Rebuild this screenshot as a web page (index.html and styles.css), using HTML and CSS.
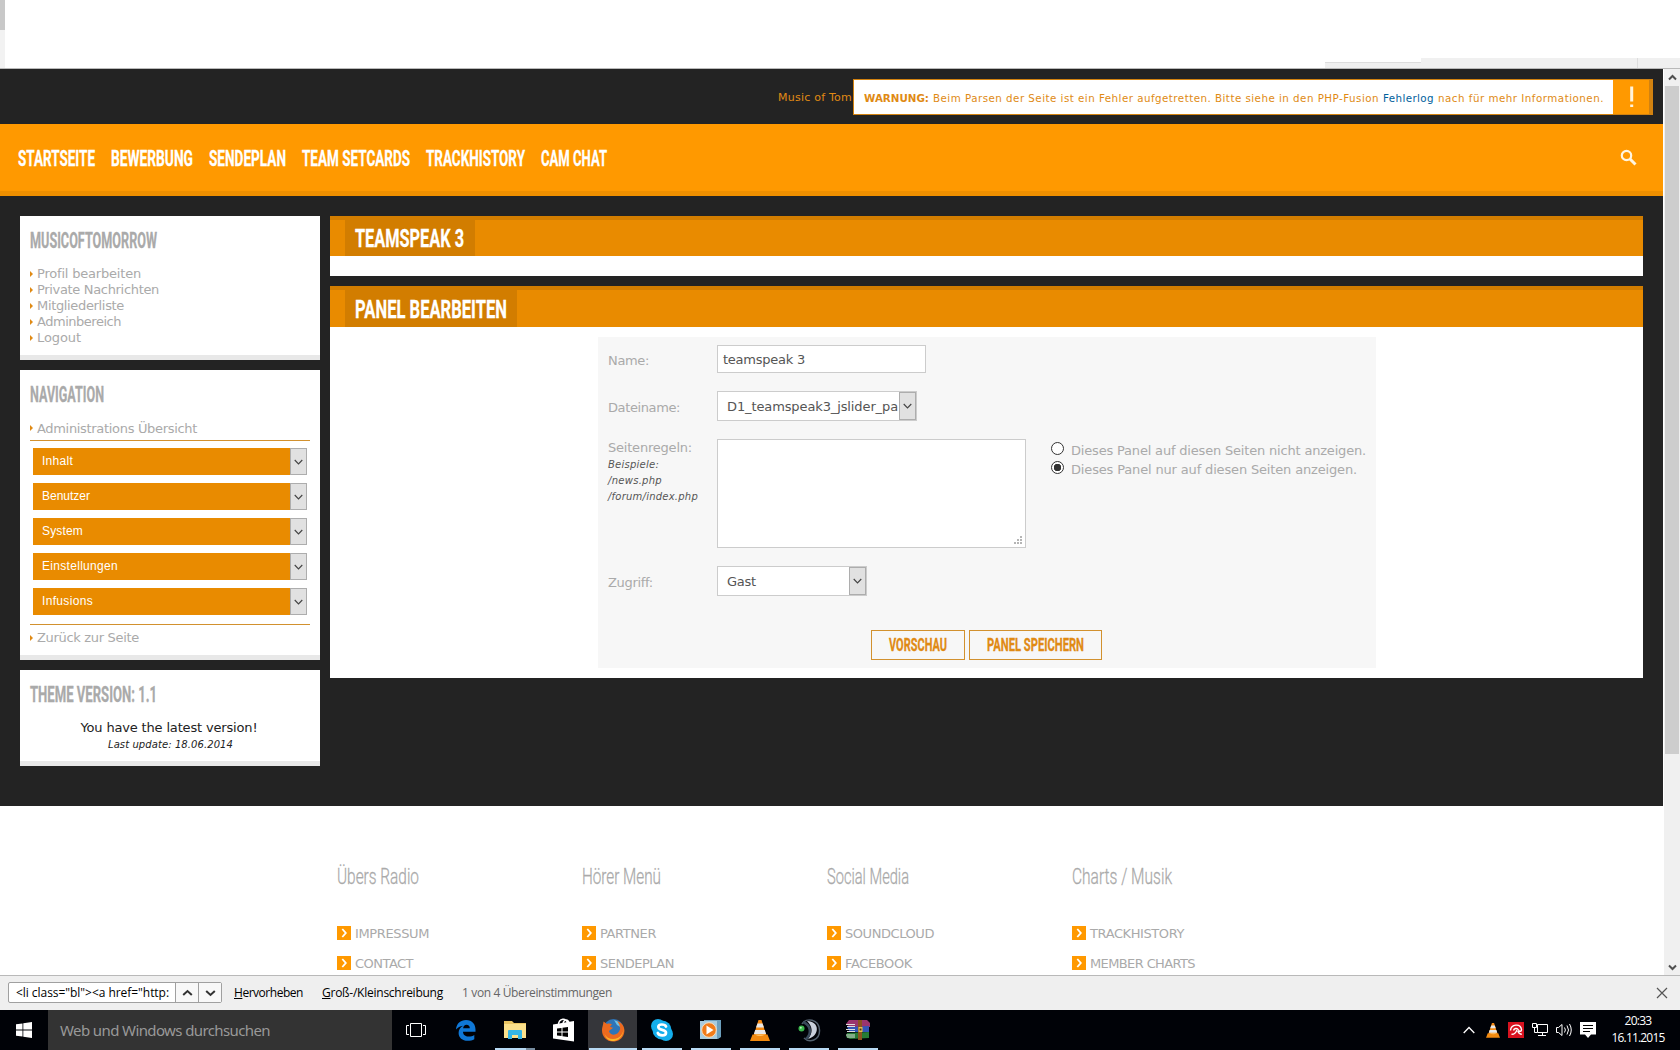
FILE: index.html
```html
<!DOCTYPE html>
<html lang="de">
<head>
<meta charset="utf-8">
<title>Panel bearbeiten</title>
<link rel="stylesheet" href="styles.css">
</head>
<body>
<svg class="defs" width="0" height="0">
  <symbol id="down" viewBox="0 0 10 6"><path d="M.8.8 5 5 9.2.8" fill="none" stroke="#444" stroke-width="1.3"/></symbol>
  <symbol id="cone" viewBox="0 0 20 22"><path d="M8.5 1h3l5 16h-13z" fill="#f58a13"/><path d="M7.5 4.5h5l1.5 4H6zM5.2 11h9.6l1.3 4H3.9z" fill="#e8e8e8"/><path d="M2.5 15.5h15L20 22H0z" fill="#f28a10"/><path d="M4.5 15.5h11q-5 3-11 0z" fill="#ffc36b"/></symbol>
  <symbol id="chev" viewBox="0 0 14 14"><path fill="#f90" d="M0 0h14v14H0z"/><path d="M5.3 3 8.8 7 5.3 11" fill="none" stroke="#fff" stroke-width="1.8"/></symbol>
</svg>

<div class="chrome"><i class="edge"></i><i class="step"></i><i class="strip"></i></div>

<div class="viewport">
  <div class="page">
    <header class="top">
      <span class="site" data-w="74">Music of Tom</span>
      <div class="warning">
        <p><b data-w="65">WARNUNG:</b><span data-w="446">Beim Parsen der Seite ist ein Fehler aufgetretten. Bitte siehe in den PHP-Fusion</span><a data-w="51">Fehlerlog</a><span data-w="166">nach für mehr Informationen.</span></p>
        <div class="bang"><svg width="36" height="34" viewBox="0 0 36 34"><path d="M17.2 6.500h3v15h-3zM17.200 24.500h3v2.500h-3z" fill="#fff3dc"/></svg></div>
      </div>
    </header>
    <nav class="menu">
      <a class="cond" data-w="77">STARTSEITE</a><a class="cond" data-w="82">BEWERBUNG</a><a class="cond" data-w="77">SENDEPLAN</a><a class="cond" data-w="108">TEAM SETCARDS</a><a class="cond" data-w="99">TRACKHISTORY</a><a class="cond" data-w="66">CAM CHAT</a>
      <svg class="search" width="17" height="17" viewBox="0 0 17 17" fill="none" stroke="#fff5e0"><circle cx="6.500" cy="6.500" r="4.700" stroke-width="2.200"/><path d="m10 10 5.500 5.500" stroke-width="3"/></svg>
    </nav>
    <div class="columns">
      <aside>
        <section class="box box-user">
          <h3 class="cond" data-w="127">MUSICOFTOMORROW</h3>
          <ul>
            <li><span data-w="104">Profil bearbeiten</span></li>
            <li><span data-w="122">Private Nachrichten</span></li>
            <li><span data-w="87">Mitgliederliste</span></li>
            <li><span data-w="84">Adminbereich</span></li>
            <li><span data-w="44">Logout</span></li>
          </ul>
        </section>
        <section class="box box-nav">
          <h3 class="cond" data-w="74">NAVIGATION</h3>
          <ul><li><span data-w="160">Administrations Übersicht</span></li></ul>
          <div class="selects">
            <div class="sel"><span data-w="31">Inhalt</span><i><svg width="9" height="6"><use href="#down"/></svg></i></div>
            <div class="sel"><span data-w="48">Benutzer</span><i><svg width="9" height="6"><use href="#down"/></svg></i></div>
            <div class="sel"><span data-w="41">System</span><i><svg width="9" height="6"><use href="#down"/></svg></i></div>
            <div class="sel"><span data-w="76">Einstellungen</span><i><svg width="9" height="6"><use href="#down"/></svg></i></div>
            <div class="sel"><span data-w="51">Infusions</span><i><svg width="9" height="6"><use href="#down"/></svg></i></div>
          </div>
          <ul><li><span data-w="102">Zurück zur Seite</span></li></ul>
        </section>
        <section class="box box-version">
          <h3 class="cond" data-w="127">THEME VERSION: 1.1</h3>
          <p><span data-w="177">You have the latest version!</span></p>
          <p class="small"><span data-w="125">Last update: 18.06.2014</span></p>
        </section>
      </aside>
      <main>
        <section class="panel panel-first">
          <header><h2><span class="cond" data-w="109">TEAMSPEAK 3</span></h2></header>
        </section>
        <section class="panel panel-edit">
          <header><h2><span class="cond" data-w="152">PANEL BEARBEITEN</span></h2></header>
          <form>
            <div class="row r-name"><label><span data-w="41">Name:</span></label><div class="field input"><span data-w="82">teamspeak 3</span></div></div>
            <div class="row r-file"><label><span data-w="72">Dateiname:</span></label><div class="field drop"><div><span data-w="171">D1_teamspeak3_jslider_pa</span></div><i><svg width="9" height="6"><use href="#down"/></svg></i></div></div>
            <div class="row r-rules">
              <label><span data-w="84">Seitenregeln:</span><em><span data-w="51">Beispiele:</span></em><em><span data-w="54">/news.php</span></em><em><span data-w="90">/forum/index.php</span></em></label>
              <div class="field area"><svg width="9" height="9" fill="#b5b5b5"><path d="M6 0h2v2H6zM3 3h2v2H3zM6 3h2v2H6zM0 6h2v2H0zM3 6h2v2H3zM6 6h2v2H6z"/></svg></div>
              <div class="radios">
                <div><i class="radio"></i><span data-w="295">Dieses Panel auf diesen Seiten nicht anzeigen.</span></div>
                <div><i class="radio on"></i><span data-w="286">Dieses Panel nur auf diesen Seiten anzeigen.</span></div>
              </div>
            </div>
            <div class="row r-access"><label><span data-w="45">Zugriff:</span></label><div class="field drop narrow"><div><span data-w="29">Gast</span></div><i><svg width="9" height="6"><use href="#down"/></svg></i></div></div>
            <div class="buttons"><a><span class="cond" data-w="58">VORSCHAU</span></a><a><span class="cond" data-w="97">PANEL SPEICHERN</span></a></div>
          </form>
        </section>
      </main>
    </div>
    <footer>
      <div><h4 class="cond" data-w="82">Übers Radio</h4><p><svg width="14" height="14"><use href="#chev"/></svg><span data-w="74">IMPRESSUM</span></p><p><svg width="14" height="14"><use href="#chev"/></svg><span data-w="58">CONTACT</span></p></div>
      <div><h4 class="cond" data-w="79">Hörer Menü</h4><p><svg width="14" height="14"><use href="#chev"/></svg><span data-w="56">PARTNER</span></p><p><svg width="14" height="14"><use href="#chev"/></svg><span data-w="74">SENDEPLAN</span></p></div>
      <div><h4 class="cond" data-w="82">Social Media</h4><p><svg width="14" height="14"><use href="#chev"/></svg><span data-w="89">SOUNDCLOUD</span></p><p><svg width="14" height="14"><use href="#chev"/></svg><span data-w="67">FACEBOOK</span></p></div>
      <div><h4 class="cond" data-w="100">Charts / Musik</h4><p><svg width="14" height="14"><use href="#chev"/></svg><span data-w="94">TRACKHISTORY</span></p><p><svg width="14" height="14"><use href="#chev"/></svg><span data-w="105">MEMBER CHARTS</span></p></div>
    </footer>
  </div>
  <div class="scrollbar">
    <svg width="9" height="7" viewBox="0 0 9 7"><path d="M1 5.500 4.500 2 8 5.500" fill="none" stroke="#505050" stroke-width="2"/></svg>
    <i></i>
    <svg width="9" height="7" viewBox="0 0 9 7"><path d="M1 1.500 4.500 5 8 1.500" fill="none" stroke="#505050" stroke-width="2"/></svg>
  </div>
</div>

<div class="findbar">
  <div class="find"><div class="query"><span data-w="153">&lt;li class="bl"&gt;&lt;a href="http:</span></div><i><svg width="11" height="8" viewBox="0 0 11 8"><path d="M1.200 6 5.500 2l4.300 4" fill="none" stroke="#333" stroke-width="2"/></svg></i><i><svg width="11" height="8" viewBox="0 0 11 8"><path d="M1.200 2 5.500 6l4.300-4" fill="none" stroke="#333" stroke-width="2"/></svg></i></div>
  <span class="opt1" data-w="69"><u>H</u>ervorheben</span>
  <span class="opt2" data-w="121"><u>G</u>roß-/Kleinschreibung</span>
  <span class="count" data-w="150">1 von 4 Übereinstimmungen</span>
  <svg class="close" width="12" height="12" viewBox="0 0 12 12"><path d="m1 1 10 10M11 1 1 11" stroke="#555" stroke-width="1.200"/></svg>
</div>

<div class="taskbar">
  <div class="start"><svg width="16" height="16" viewBox="0 0 16 16" fill="#fff"><path d="M0 2.300 6.500 1.400v6.200H0zM7.300 1.300 16 0v7.600H7.300zM0 8.400h6.500v6.200L0 13.700zM7.300 8.400H16V16l-8.700-1.300z"/></svg></div>
  <div class="cortana"><span data-w="210">Web und Windows durchsuchen</span></div>
  <div class="apps">
    <div><svg width="20" height="14" viewBox="0 0 20 14" fill="none" stroke="#fff"><path d="M4.500.5h11v13h-11zM3 2.500H.5v9H3M17 2.500h2.500v9H17"/></svg></div>
    <div><svg width="22" height="22" viewBox="0 0 22 22"><path d="M1 10.500C1.500 4.500 5.500 1 11 1c6.500 0 9.500 4.500 9.500 9.500v2.300H8c0 3.200 2.500 4.700 5.500 4.700 2.500 0 4.300-.7 5.800-1.600v4.300c-1.800 1-4 1.600-6.700 1.600-5.200 0-9-3-9-7.800 0-3.200 1.600-5.800 4.600-7.300C5 7.300 2.700 8.500 1 10.500zm7.100-1.200h6.700c0-2.300-1.200-3.600-3.300-3.600-1.900 0-3.100 1.400-3.400 3.600z" fill="#0f78d7"/></svg></div>
    <div class="run stacked"><svg width="22" height="20" viewBox="0 0 22 20"><path d="M0 1h8l2 2h12v15H0z" fill="#e9c461"/><path d="M0 4h22v14H0z" fill="#fbe08b"/><path d="M4 19v-8q0-1 1-1h12q1 0 1 1v8h-4v-4H8v4z" fill="#35b5e5"/></svg></div>
    <div><svg width="22" height="24" viewBox="0 0 22 24"><path d="M0 6.500 21 3v20.500L0 20.500z" fill="#fff"/><path d="M5.500 7c0-7 8.500-8 8.800-1.500M10 6c.5-5 5-5.500 6-1" fill="none" stroke="#fff" stroke-width="1.500"/><path d="M4 10.500 8.500 10v3.500H4zM9.500 9.800 15 9v4.500H9.500zM4 14.500h4.500V18L4 17.500zM9.500 14.500H15V19l-5.500-.8z" fill="#000"/></svg></div>
    <div class="run active"><svg width="24" height="24" viewBox="0 0 24 24"><circle cx="12.500" cy="11" r="10" fill="#2e75b8"/><path d="M13 2q7 2 8 8l-5-3z" fill="#6ec1e4"/><path d="M2.500 3.500 6 6c2-.8 3.500-.5 5 .5L9 8.500c1 1 2 1 3 1-1 2-3.500 2-4 4 1.500 4.500 9 4.500 11-2 .5-3-1-6-3-8.500 6 2 8.500 7 7 12.500C21.500 21 17 23.500 12 23.500 5.500 23.500 1 18.500 1 12.500c0-3 1-4.500 1.500-9z" fill="#ec6a1f"/><path d="M22 7c2 8-3 14-10 14-4 0-7-2-8.500-5C5 21 9 23.500 13 23c7-1 11-8 9-16z" fill="#fbb829"/></svg></div>
    <div class="run"><svg width="22" height="22" viewBox="0 0 22 22"><circle cx="7" cy="7" r="7" fill="#14aeec"/><circle cx="15" cy="15" r="7" fill="#14aeec"/><circle cx="11" cy="11" r="9.500" fill="#14aeec"/><path d="M15 7.500C14 5 7.300 4.500 7.300 8c0 3.800 7.700 2 7.700 5.700 0 3.600-7 3.300-8.200.3" fill="none" stroke="#fff" stroke-width="2.700" stroke-linecap="round"/></svg></div>
    <div class="run"><svg width="21" height="20" viewBox="0 0 21 20"><path d="M4 0h17v17l-3 2H4z" fill="#6c9fbd"/><path d="M0 1h17v18H0z" fill="#a8cce0"/><circle cx="9" cy="10" r="7.300" fill="#f07b1a" stroke="#f9ddbb"/><path d="m6.500 5.500 7 4.500-7 4.500z" fill="#fff"/></svg></div>
    <div class="run"><svg width="20" height="22"><use href="#cone"/></svg></div>
    <div class="run"><svg width="24" height="24" viewBox="0 0 24 24" fill="none"><path d="M5 6C9-1 22 1 22.500 12S12 25 7 20" stroke="#53616f" stroke-width="1.500"/><path d="M10 3c13 0 13 15 1 18 5-6 5-12-1-18z" fill="#c9d0dc"/><path d="M6 4c8 3 9 12 3 17" stroke="#39485a" stroke-width="2.500"/><circle cx="4.500" cy="10.500" r="3" fill="#39b54a"/><circle cx="3.800" cy="9.700" r="1" fill="#b8f0bb"/></svg></div>
    <div class="run"><svg width="24" height="20" viewBox="0 0 24 20"><path d="M3 0h18l3 3v4H4L0 4z" fill="#9a356e"/><path d="m1 7 22-1v6H4z" fill="#3455b7"/><path d="m1 13 22-1v6l-19 1-4-2z" fill="#267c35"/><path d="M0 4.500h9M1 6.500h8M0 9.500h9M1 11.500h8M0 15h9M1 17h8" fill="none" stroke="#ddd"/><path d="M12 0h4v20h-4z" fill="#8a5320"/><path d="M12.500 7h4v5h-4z" fill="#e6bd49"/><path d="M13.500 8.500h2v2h-2z" fill="#503010"/></svg></div>
  </div>
  <div class="tray">
    <svg width="12" height="8" viewBox="0 0 12 8"><path d="m.7 7 5.300-5.500L11.300 7" fill="none" stroke="#fff" stroke-width="1.300"/></svg>
    <svg width="14" height="16"><use href="#cone"/></svg>
    <svg width="16" height="16" viewBox="0 0 16 16"><path d="M0 0h16v16H0z" fill="#d8121f"/><path d="M2.500 8.500C3 2 12.500 1 13.500 7.500c.2 2-2 2.500-3 .5C9 5.500 6 6.500 5.500 8.500M9 8c-1 2.500-3 4.500-5.500 4.300M9.800 9c.7 1.800 1.800 3.300 4 3.300" fill="none" stroke="#fff" stroke-width="1.400"/></svg>
    <svg width="16" height="14" viewBox="0 0 16 14" fill="none" stroke="#fff"><path d="M5.500 1.500h10v8h-10zM10.500 10v3M6 12.500h8M.5.500h4v4h-4zM2.500 5v4.500h3"/></svg>
    <svg width="16" height="14" viewBox="0 0 16 14" fill="none" stroke="#fff"><path d="M.5 4.500h2L6 1.500v11L2.500 9.500h-2zM8.500 4.500q1.800 2.500 0 5M11 2.500q3 4.500 0 9M13.500 1q3.500 6 0 12"/></svg>
    <svg width="16" height="16" viewBox="0 0 16 16"><path d="M0 0h16v12.500h-5L8 16l-3-3.500H0z" fill="#fff"/><path d="M3 3.500h10M3 6.500h10M3 9.500h7" stroke="#000"/></svg>
    <div class="clock"><span data-w="27">20:33</span><br><span data-w="53">16.11.2015</span></div>
  </div>
</div>
<script src="fit.js"></script>
</body>
</html>
```
FILE: styles.css
```css
* { box-sizing: border-box; }
body { margin: 0; width: 1680px; height: 1050px; overflow: hidden; background: #fff; font: 13px/16px "DejaVu Sans", sans-serif; color: #aaa; }
h2, h3, h4, p, ul { margin: 0; padding: 0; }
ul { list-style: none; }
svg { display: block; flex: none; }
.defs { position: absolute; }
[data-w] { display: inline-block; white-space: nowrap; }
.cond { font-family: Roboto, sans-serif; transform-origin: 0 50%; -webkit-text-stroke: .3px currentColor; }

.chrome { height: 69px; position: relative; border-bottom: 1px solid #b9b9b9; }
.chrome i { position: absolute; }
.edge { left: 0; top: 0; width: 5px; height: 68px; background: linear-gradient(#c8c8c8 30px, #f2f2f2 30px); }
.step { left: 1325px; top: 62px; width: 96px; height: 6px; background: #f0f0f0; border-top: 1px solid #ddd; }
.strip { left: 1421px; top: 58px; width: 259px; height: 10px; background: linear-gradient(90deg, #f0f0f0 216px, #ddd 216px, #ddd 217px, #f0f0f0 217px); }

.viewport { display: flex; height: 906px; }
.page { width: 1663px; height: 906px; overflow: hidden; background: #232323; }
.top { height: 55px; position: relative; padding: 21px 0 0 778px; font-size: 11px; color: #e08a14; }
.warning { position: absolute; left: 853px; top: 10px; width: 800px; height: 36px; background: #fff; border: 1px solid #d28210; border-right: 4px solid #d28210; display: flex; justify-content: space-between; }
.warning p { display: flex; gap: 4px; padding: 10px 0 0 10px; font-size: 10.300px; color: #e08a14; }
.warning a { color: #00609c; }
.bang { background: #f90; }

.menu { height: 72px; background: #f90; border-bottom: 5px solid #ee8f00; display: flex; align-items: flex-start; gap: 16px; padding: 20px 26px 0 18px; color: #fff; font-size: 22.500px; font-weight: 700; line-height: 28px; }
.search { margin: 5px 0 0 auto; }

.columns { display: flex; gap: 10px; padding: 20px 20px 0; height: 610px; }
aside { width: 300px; display: flex; flex-direction: column; gap: 10px; }
.box { background: #fff; border-bottom: 5px solid #e8e8e8; padding: 11px 10px 0; }
.box h3 { font-size: 22px; line-height: 28px; height: 28px; margin-bottom: 11px; font-weight: 700; display: block; }
.box-user { height: 144px; }
.box-nav { height: 290px; }
.box-version { height: 96px; color: #222; text-align: center; }
.box-version h3 { color: #aaa; text-align: left; }
.box-version p { margin-left: -2px; }
.box-version .small { margin-left: 1px; font-size: 10px; font-style: italic; padding-top: 1px; }
.box li { display: flex; align-items: center; gap: 4px; height: 16px; }
.box li::before { content: ""; border: 3px solid transparent; border-left-color: #e08a14; border-right: 0; }
.box-nav h3 + ul li span { padding-top: 1px; }
.selects { margin: 4px 0 5px; padding: 7px 3px 9px; border: solid #d2912e; border-width: 1px 0; display: flex; flex-direction: column; gap: 8px; }
.sel { height: 27px; background: #e98b00; color: #fff; font: 12px/27px "Liberation Sans", sans-serif; padding-left: 9px; display: flex; justify-content: space-between; }
.sel i, .drop i { width: 17px; background: #e1e1e1; border: 1px solid #adadad; display: flex; align-items: center; justify-content: center; flex: none; }

main { flex: 1; display: flex; flex-direction: column; gap: 10px; }
.panel { background: #fff; }
.panel-first { height: 60px; }
.panel-edit { height: 392px; }
.panel header { background: #e98b00; border-top: 4px solid #d27d00; height: 40px; padding-left: 15px; display: flex; }
.panel-edit header { height: 41px; }
.panel h2 { background: #d27d00; color: #fff; padding: 3px 11px 0 10px; font-size: 26.500px; line-height: 30px; font-weight: 700; }
.panel-edit h2 { padding: 4px 10px 0; }
form { width: 778px; height: 331px; margin: 10px 0 0 268px; background: #f7f7f7; padding: 8px 0 0 10px; }
.row { display: flex; }
.row label { width: 109px; }
.field { background: #fff; border: 1px solid #ccc; color: #555; }
.input { width: 209px; height: 28px; padding: 6px 5px; }
.drop { width: 200px; height: 30px; display: flex; }
.drop div { flex: 1; min-width: 0; overflow: hidden; padding: 7px 0 0 9px; }
.narrow { width: 150px; }
.r-name label { padding-top: 8px; }
.r-file { margin-top: 18px; }
.r-file label { padding-top: 9px; }
.r-rules { margin-top: 18px; }
.r-rules label { padding-top: 1px; }
.row em { display: block; font-size: 10px; color: #555; position: relative; top: 1px; }
.area { width: 309px; height: 109px; display: flex; align-items: flex-end; justify-content: flex-end; padding: 2px; }
.radios { padding: 1px 0 0 25px; }
.radios div { display: flex; height: 19px; }
.radios span { padding-top: 3px; }
.radio { width: 13px; height: 13px; margin: 2px 7px 0 0; border: 1px solid #333; border-radius: 50%; background: #fff; }
.on { background: radial-gradient(#333 3.500px, #fff 4px); }
.r-access { margin-top: 18px; }
.r-access label { padding-top: 9px; }
.buttons { display: flex; gap: 4px; margin: 34px 0 0 263px; }
.buttons a { height: 30px; padding: 2px 17px 0; border: 1px solid #d2912e; color: #e08a14; font-size: 18px; font-weight: 700; line-height: 24px; }

footer { background: #fff; height: 169px; padding: 58px 0 0 337px; display: flex; }
footer > div { width: 245px; }
footer h4 { font-size: 22.500px; font-weight: 300; line-height: 24px; height: 24px; margin-bottom: 30px; color: #aaa; }
footer p { display: flex; gap: 4px; height: 30px; align-items: center; margin-top: 0; }
footer p span { padding-top: 1px; }

.scrollbar { width: 17px; background: #f0f0f0; border-left: 1px solid #fff; display: flex; flex-direction: column; align-items: center; padding: 5px 0 4px; }
.scrollbar i { width: 14px; height: 668px; background: #cdcdcd; margin: 5px 0 auto; }

.findbar { height: 35px; background: #efefef; border-top: 1px solid #b9b9b9; display: flex; padding: 6px 12px 0 8px; font: 12px/21px "Open Sans", sans-serif; color: #000; }
.find { display: flex; width: 214px; height: 21px; border: 1px solid #a0a0a0; border-radius: 2px; background: #fff; line-height: 20px; }
.query { flex: 1; padding-left: 7px; }
.find i { width: 23px; border-left: 1px solid #a0a0a0; background: #f8f8f8; display: flex; align-items: center; justify-content: center; }
.opt1 { margin-left: 12px; }
.opt2 { margin-left: 19px; }
.count { margin-left: 19px; color: #666; }
.close { margin: 5px 0 0 auto; }

.taskbar { height: 40px; background: #000207; display: flex; color: #fff; }
.start { width: 48px; padding: 12px 0 0 16px; }
.cortana { width: 344px; background: #333; color: #999; padding: 9px 0 0 12px; font: 15px/22px "Noto Sans", sans-serif; }
.apps { display: flex; }
.apps > div { width: 49px; height: 40px; display: flex; align-items: center; justify-content: center; background: linear-gradient(#b7d9f3, #b7d9f3) 50% 100% / 0 2px no-repeat; }
.apps > div:first-child { padding-right: 2px; }
.apps > .run { background-size: 40px 2px; }
.apps > .active { background-size: 48px 2px; background-color: #35363a; }
.apps > .stacked { background-image: linear-gradient(90deg, #b7d9f3 31px, #778da0 31px); }
.tray { margin-left: auto; padding-right: 15px; display: flex; align-items: center; gap: 8px; font: 12px/17px "Open Sans", sans-serif; }
.tray svg:first-child { margin-right: 3px; }
.clock { width: 54px; margin-left: 7px; text-align: center; padding-bottom: 2px; }
```
FILE: fit.js
```js
// Fit each label to its set width: condensed faces are scaled, others are tracked.
document.querySelectorAll('[data-w]').forEach(function (el) {
  var target = +el.dataset.w;
  if (el.classList.contains('cond')) {
    el.style.width = 'max-content';
    var own = el.getBoundingClientRect().width;
    el.style.width = target + 'px';
    el.style.transform = 'scaleX(' + target / own + ')';
    el.style.flex = 'none';
  } else {
    var natural = el.getBoundingClientRect().width;
    el.style.letterSpacing = (target - natural) / el.textContent.length + 'px';
  }
});
```
